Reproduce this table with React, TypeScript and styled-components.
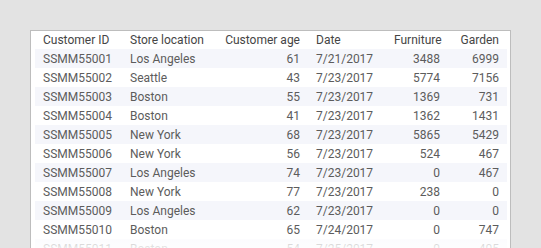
import React from "react";
import styled, { createGlobalStyle } from "styled-components";

const GlobalStyle = createGlobalStyle`
    html, body {
        margin: 0;
        padding: 0;
        background: #e3e3e3;
        overflow: hidden;
        font-family: Roboto, "Liberation Sans", sans-serif;
    }
`;

const Page = styled.div`
    padding: 30px 0 0 30px;
    height: 248px;
    box-sizing: border-box;
    overflow: hidden;
`;

const Panel = styled.div`
    position: relative;
    width: 481px;
    height: 218px;
    box-sizing: border-box;
    background: #ffffff;
    border: 1px solid #bdbdbd;
    border-bottom: none;
    padding: 0 3px 0 4px;
    overflow: hidden;

    &::after {
        content: "";
        position: absolute;
        left: 0;
        right: 0;
        bottom: 0;
        height: 14px;
        background: linear-gradient(to bottom, rgba(255, 255, 255, 0.55), rgba(255, 255, 255, 0.85));
    }
`;

const Table = styled.table`
    width: 472px;
    border-collapse: collapse;
    table-layout: fixed;
    font-size: 12px;
    color: #5c5c5c;
`;

const HeadCell = styled.th<{ $right?: boolean; $w: number }>`
    box-sizing: border-box;
    width: ${p => p.$w}px;
    height: 18px;
    padding: 0 8px;
    font-weight: 400;
    color: #454545;
    text-align: ${p => (p.$right ? "right" : "left")};
    white-space: nowrap;
`;

const Row = styled.tr<{ $striped: boolean }>`
    height: 19px;
    background: ${p => (p.$striped ? "#f5f6fb" : "#ffffff")};
`;

const Cell = styled.td<{ $right?: boolean }>`
    padding: 0 8px;
    text-align: ${p => (p.$right ? "right" : "left")};
    white-space: nowrap;
`;

const columns = [
    { title: "Customer ID", w: 87 },
    { title: "Store location", w: 94 },
    { title: "Customer age", w: 92, right: true },
    { title: "Date", w: 78 },
    { title: "Furniture", w: 62, right: true },
    { title: "Garden", w: 59, right: true },
];

const rows: [string, string, number, string, number, number][] = [
    ["SSMM55001", "Los Angeles", 61, "7/21/2017", 3488, 6999],
    ["SSMM55002", "Seattle", 43, "7/23/2017", 5774, 7156],
    ["SSMM55003", "Boston", 55, "7/23/2017", 1369, 731],
    ["SSMM55004", "Boston", 41, "7/23/2017", 1362, 1431],
    ["SSMM55005", "New York", 68, "7/23/2017", 5865, 5429],
    ["SSMM55006", "New York", 56, "7/23/2017", 524, 467],
    ["SSMM55007", "Los Angeles", 74, "7/23/2017", 0, 467],
    ["SSMM55008", "New York", 77, "7/23/2017", 238, 0],
    ["SSMM55009", "Los Angeles", 62, "7/23/2017", 0, 0],
    ["SSMM55010", "Boston", 65, "7/24/2017", 0, 747],
    ["SSMM55011", "Boston", 54, "7/25/2017", 0, 405],
];

export default function App() {
    return (
        <>
            <GlobalStyle />
            <Page>
                <Panel>
                    <Table>
                        <thead>
                            <tr>
                                {columns.map(c => (
                                    <HeadCell key={c.title} $w={c.w} $right={c.right}>
                                        {c.title}
                                    </HeadCell>
                                ))}
                            </tr>
                        </thead>
                        <tbody>
                            {rows.map((r, i) => (
                                <Row key={r[0]} $striped={i % 2 === 0}>
                                    <Cell>{r[0]}</Cell>
                                    <Cell>{r[1]}</Cell>
                                    <Cell $right>{r[2]}</Cell>
                                    <Cell>{r[3]}</Cell>
                                    <Cell $right>{r[4]}</Cell>
                                    <Cell $right>{r[5]}</Cell>
                                </Row>
                            ))}
                        </tbody>
                    </Table>
                </Panel>
            </Page>
        </>
    );
}
